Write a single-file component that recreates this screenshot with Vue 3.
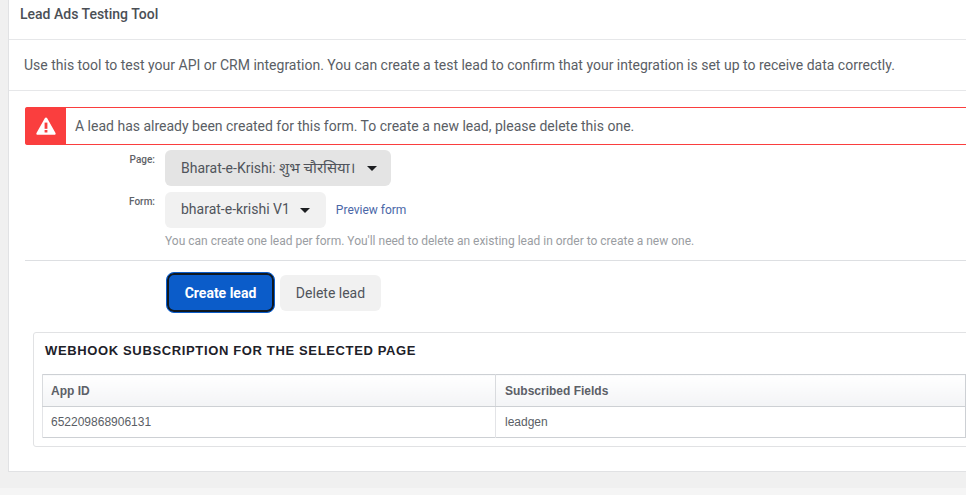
<template>
  <div class="page">
    <div class="card">
      <div class="card-title">Lead Ads Testing Tool</div>
      <div class="intro">
        Use this tool to test your API or CRM integration. You can create a test lead to confirm that your integration is set up to receive data correctly.
      </div>
      <div class="body">
        <div class="alert">
          <div class="alert-icon">
            <svg width="20" height="18" viewBox="0 0 20 18">
              <path d="M10 0.6c.5 0 .9.3 1.2.7l8.3 14.6c.5.9-.1 1.9-1.1 1.9H1.6c-1 0-1.6-1-1.1-1.9L8.8 1.3c.3-.4.7-.7 1.2-.7z" fill="#fff" />
              <rect x="8.6" y="5.6" width="2.8" height="6.2" fill="#fa3e3e" />
              <rect x="8.6" y="13" width="2.8" height="2.5" fill="#fa3e3e" />
            </svg>
          </div>
          <div class="alert-text">A lead has already been created for this form. To create a new lead, please delete this one.</div>
        </div>

        <div class="field page-field">
          <label>Page:</label>
          <div class="select dark">
            <span>Bharat-e-Krishi: <span class="hindi">शुभ चौरसिया।</span></span>
            <i class="caret"></i>
          </div>
        </div>
        <div class="field form-field">
          <label>Form:</label>
          <div class="select">
            <span>bharat-e-krishi V1</span>
            <i class="caret"></i>
          </div>
          <a class="preview">Preview form</a>
        </div>
        <div class="hint">You can create one lead per form. You'll need to delete an existing lead in order to create a new one.</div>

        <div class="actions">
          <button class="btn primary">Create lead</button>
          <button class="btn">Delete lead</button>
        </div>

        <div class="webhook">
          <div class="webhook-title">WEBHOOK SUBSCRIPTION FOR THE SELECTED PAGE</div>
          <table>
            <thead>
              <tr>
                <th class="col-id">App ID</th>
                <th>Subscribed Fields</th>
              </tr>
            </thead>
            <tbody>
              <tr v-for="row in rows" :key="row.id">
                <td>{{ row.id }}</td>
                <td>{{ row.fields }}</td>
              </tr>
            </tbody>
          </table>
        </div>
      </div>
    </div>
    <div class="footer-strip"></div>
  </div>
</template>

<script setup>
const rows = [{ id: '652209868906131', fields: 'leadgen' }]
</script>

<style>
html,
body {
  margin: 0;
  overflow: hidden;
  background: #f0f0f0;
}
</style>

<style scoped>
.page {
  width: 966px;
  height: 495px;
  overflow: hidden;
  background: #f0f0f0;
  font-family: Roboto, "Noto Sans", sans-serif;
  color: #4b4f56;
}

.card {
  box-sizing: border-box;
  width: 1000px;
  height: 472px;
  margin-left: 8px;
  background: #fff;
  border: 1px solid #e1e2e4;
  border-top: 0;
}

.card-title {
  box-sizing: border-box;
  height: 40px;
  padding: 6px 0 0 11px;
  font-size: 14px;
  line-height: 17px;
  font-weight: 500;
  border-bottom: 1px solid #e6e7e9;
}

.intro {
  box-sizing: border-box;
  height: 51px;
  padding: 17px 0 0 15px;
  font-size: 14px;
  line-height: 17px;
  color: #5a5e65;
  border-bottom: 1px solid #e6e7e9;
}

.body {
  padding: 16px 0 0 16px;
}

.alert {
  display: flex;
  box-sizing: border-box;
  height: 38px;
  border: 1px solid #fa3e3e;
  border-right: 0;
  border-radius: 3px 0 0 3px;
}

.alert-icon {
  display: flex;
  align-items: center;
  justify-content: center;
  width: 41px;
  margin: -1px 0 -1px -1px;
  background: #fa3e3e;
  border-radius: 3px 0 0 3px;
}

.alert-text {
  padding-left: 9px;
  font-size: 14px;
  line-height: 36px;
  color: #5a5e65;
}

.field {
  display: flex;
  align-items: flex-start;
}

.page-field {
  margin-top: 5px;
}

.form-field {
  margin-top: 6px;
}

.field label {
  width: 130px;
  padding-top: 3px;
  text-align: right;
  font-size: 10px;
  line-height: 14px;
  font-weight: 500;
  color: #5f6368;
}

.select {
  display: flex;
  align-items: center;
  height: 36px;
  margin-left: 10px;
  padding: 0 14px 2px 16px;
  box-sizing: border-box;
  border-radius: 6px;
  background: #f1f1f1;
  font-size: 14px;
  color: #50545b;
}

.select.dark {
  background: #e4e4e4;
}

.hindi {
  font-size: 15px;
}

.caret {
  width: 0;
  height: 0;
  margin-left: 12px;
  margin-top: 2px;
  border-left: 5px solid transparent;
  border-right: 5px solid transparent;
  border-top: 5px solid #1c1e21;
}

.form-field .select {
  padding-right: 16px;
}

.form-field .caret {
  margin-left: 10px;
}

.preview {
  align-self: center;
  margin-left: 10px;
  font-size: 12px;
  color: #4a67a8;
}

.hint {
  margin: 6px 0 0 140px;
  font-size: 12px;
  line-height: 14px;
  color: #9a9da2;
}

.actions {
  display: flex;
  align-items: center;
  gap: 5px;
  margin-top: 12px;
  padding: 11px 0 0 141px;
  border-top: 1px solid #dddfe2;
}

.btn {
  box-sizing: border-box;
  width: 101px;
  height: 36px;
  border: 0;
  border-radius: 6px;
  background: #f1f1f1;
  font-family: inherit;
  font-size: 14px;
  color: #50545b;
}

.btn.primary {
  width: 109px;
  height: 41px;
  border: 1px solid #0b5cc9;
  box-shadow: inset 0 0 0 2px #101820;
  border-radius: 8px;
  background: #0b5cc9;
  color: #fff;
  font-weight: 700;
}

.webhook {
  box-sizing: border-box;
  height: 115px;
  margin: 19px 0 0 8px;
  padding-left: 8px;
  border: 1px solid #e1e2e4;
  border-radius: 3px 0 0 3px;
}

.webhook-title {
  height: 41px;
  padding: 8px 0 0 3px;
  box-sizing: border-box;
  font-family: "Liberation Sans", Arial, sans-serif;
  font-size: 13px;
  line-height: 19px;
  font-weight: 700;
  letter-spacing: 0.64px;
  color: #1d2129;
}

table {
  width: 924px;
  table-layout: fixed;
  border-collapse: collapse;
  border: 1px solid #cdd0d4;
  font-family: "Liberation Sans", Arial, sans-serif;
  font-size: 12px;
}

th {
  height: 31px;
  padding: 0 9px;
  text-align: left;
  font-weight: 700;
  color: #5c6067;
  background: linear-gradient(#fff, #f3f4f6);
  border-bottom: 1px solid #cdd0d4;
  border-left: 1px solid #d9dbde;
}

th.col-id {
  padding-left: 8px;
}

td {
  height: 30px;
  padding: 0 9px;
  color: #5a5e65;
  border-left: 1px solid #e3e4e7;
}

td:first-child {
  padding-left: 8px;
}

.col-id {
  width: 435px;
}

.footer-strip {
  height: 7px;
  margin-top: 16px;
  background: #f5f5f5;
}
</style>
